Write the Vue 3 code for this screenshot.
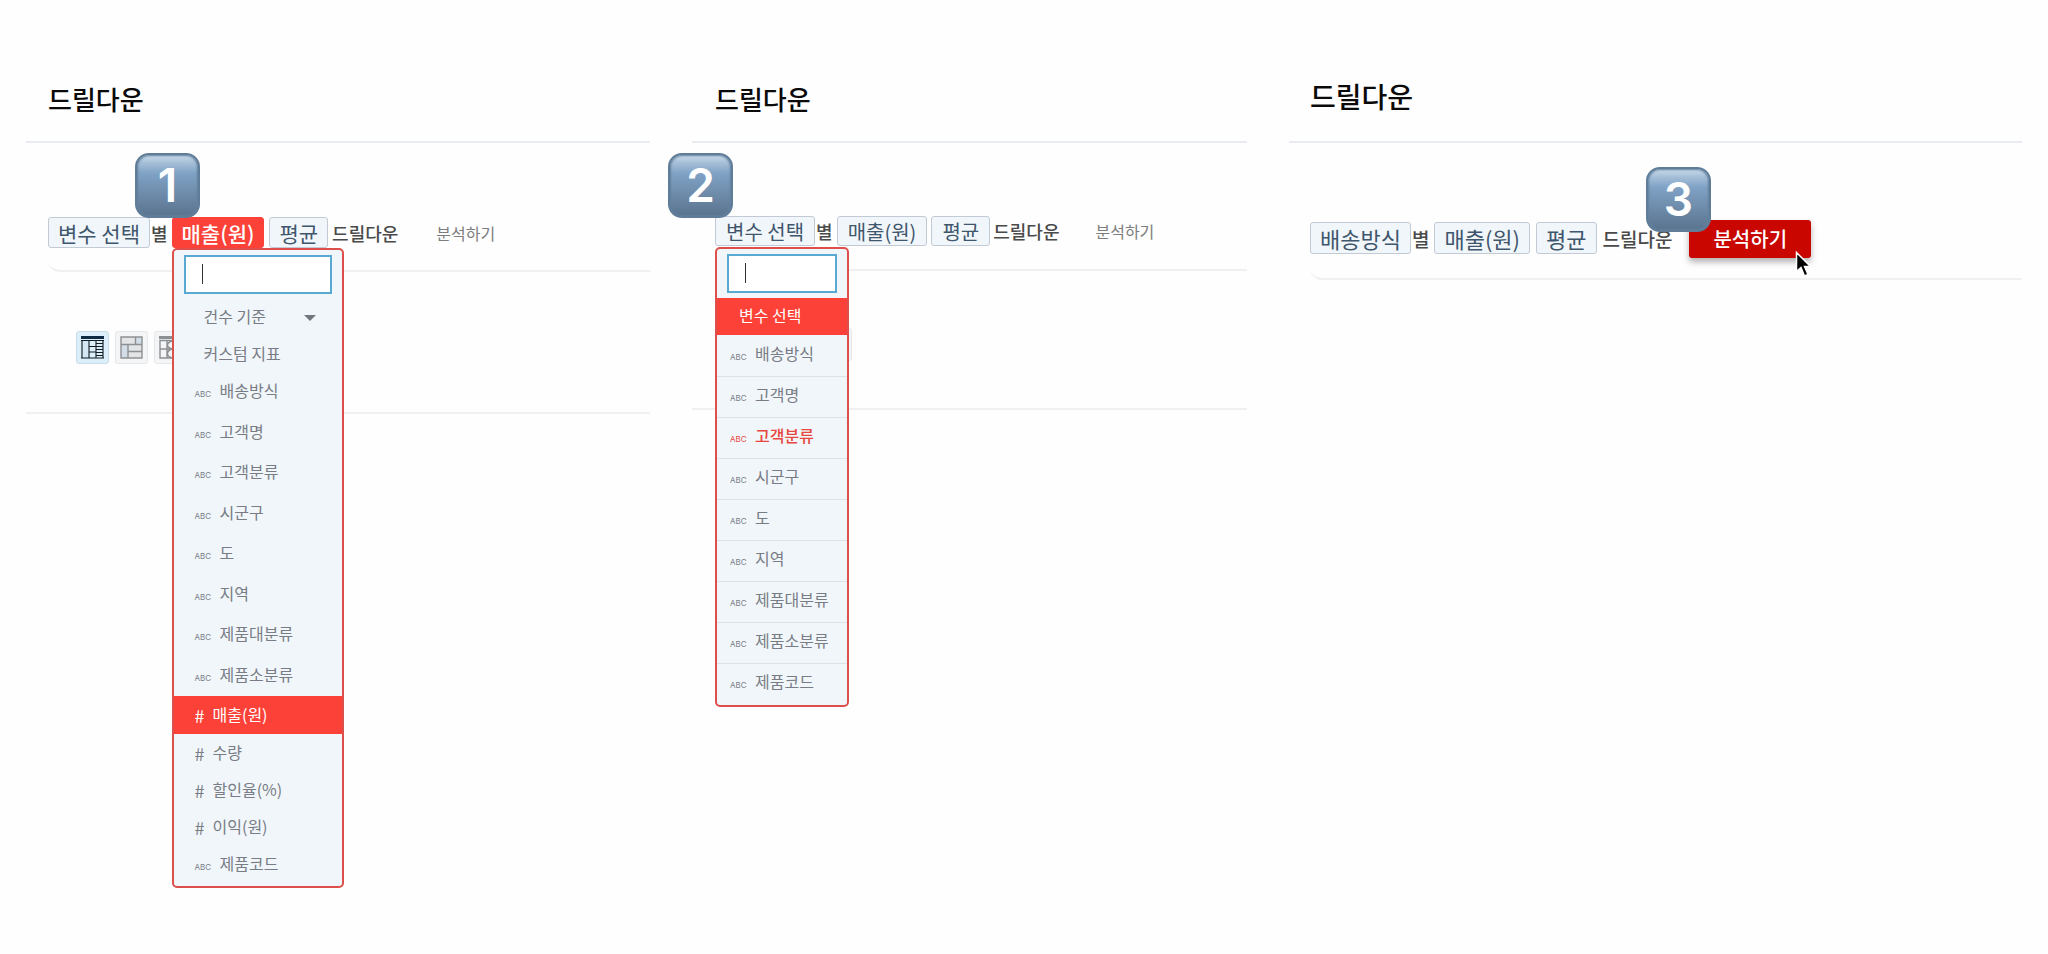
<script setup>
import { ref } from 'vue'

const dimensions = ['배송방식', '고객명', '고객분류', '시군구', '도', '지역', '제품대분류', '제품소분류']

const measures = [
  { label: '매출(원)', kind: 'num', selected: true },
  { label: '수량', kind: 'num' },
  { label: '할인율(%)', kind: 'num' },
  { label: '이익(원)', kind: 'num' },
  { label: '제품코드', kind: 'abc' },
]

const variables = [...dimensions, '제품코드'].map((label) => ({
  label,
  hot: label === '고객분류',
}))

const measureQuery = ref('')
const variableQuery = ref('')
</script>

<template>
  <main class="page">
    <section class="panel one">
      <header class="head"><h2>드릴다운</h2></header>
      <span class="badge">1</span>
      <div class="query">
        <button class="chip" type="button">변수 선택</button>
        <span class="word by">별</span>
        <div class="anchor">
          <button class="chip active" type="button">매출(원)</button>
          <div class="menu">
            <div class="search">
              <input v-model="measureQuery" type="text" aria-label="지표 검색" />
              <i class="caret"></i>
            </div>
            <button class="item plain" type="button">
              건수 기준
              <svg class="arrow" width="12" height="6" viewBox="0 0 12 6"><path d="M0 0h12L6 6z" fill="#72767f" /></svg>
            </button>
            <button class="item plain" type="button">커스텀 지표</button>
            <div class="dims">
              <button v-for="d in dimensions" :key="d" class="item" type="button">
                <small>ABC</small>{{ d }}
              </button>
            </div>
            <button
              v-for="m in measures"
              :key="m.label"
              class="item"
              :class="{ selected: m.selected }"
              type="button"
            >
              <small v-if="m.kind === 'abc'">ABC</small>
              <b v-else>#</b>{{ m.label }}
            </button>
          </div>
        </div>
        <button class="chip" type="button">평균</button>
        <span class="word">드릴다운</span>
        <button class="run" type="button">분석하기</button>
      </div>
      <div class="tools">
        <button class="tool on" type="button" aria-label="트리 표">
          <svg width="23" height="23" viewBox="0 0 23 23" fill="none">
            <path d="M0 0h23v3H0z" fill="#0d2a45" />
            <path d="M1 5h7v17H1z" fill="#d3e7f4" />
            <path d="M1 4v18.500M0 22h23M8 4v18M15 4v18M22 4v18M0 4.500h23M8 10.500h7M8 16h7M15 7.500h7M15 10.500h7M15 13.500h7M15 16.500h7M15 19.500h7" stroke="#111b22" stroke-width="1.100" />
          </svg>
        </button>
        <button class="tool" type="button" aria-label="트리맵">
          <svg width="23" height="23" viewBox="0 0 23 23" fill="none">
            <path d="M1 1h21v21H1z" fill="#e2e4e6" />
            <path d="M15.500 1H22v7h-6.500zM1 9h7v13H1z" fill="#d3dde7" />
            <path d="M1 1h21v21H1zM1 8.500h21M15.500 1v7.500M8 8.500V22M8 15.500h14" stroke="#8d9093" stroke-width="1.400" />
          </svg>
        </button>
        <button class="tool" type="button" aria-label="관계도">
          <svg width="23" height="23" viewBox="0 0 23 23" fill="none">
            <path d="M0 0h23v3H0z" fill="#8d9093" />
            <path d="M1 4.500h21V22H1zM8 4v18M1 13h14M13 5c-6 2-6 6 0 8-6 2-6 7 0 9" stroke="#8d9093" stroke-width="1.400" />
          </svg>
        </button>
      </div>
    </section>

    <section class="panel two">
      <header class="head"><h2>드릴다운</h2></header>
      <span class="badge">2</span>
      <div class="query">
        <div class="anchor">
          <button class="chip" type="button">변수 선택</button>
          <div class="menu">
            <div class="search">
              <input v-model="variableQuery" type="text" aria-label="변수 검색" />
              <i class="caret"></i>
            </div>
            <button class="item plain selected" type="button">변수 선택</button>
            <button v-for="v in variables" :key="v.label" class="item" :class="{ hot: v.hot }" type="button">
              <small>ABC</small>{{ v.label }}
            </button>
          </div>
        </div>
        <span class="word by">별</span>
        <button class="chip" type="button">매출(원)</button>
        <button class="chip" type="button">평균</button>
        <span class="word">드릴다운</span>
        <button class="run" type="button">분석하기</button>
      </div>
      <div class="tools">
        <button class="tool" type="button" aria-label="보기 1"></button>
        <button class="tool" type="button" aria-label="보기 2"></button>
        <button class="tool" type="button" aria-label="보기 3"></button>
      </div>
    </section>

    <section class="panel three">
      <header class="head"><h2>드릴다운</h2></header>
      <span class="badge">3</span>
      <div class="query">
        <button class="chip" type="button">배송방식</button>
        <span class="word by">별</span>
        <button class="chip" type="button">매출(원)</button>
        <button class="chip" type="button">평균</button>
        <span class="word">드릴다운</span>
        <div class="anchor">
          <button class="run primary" type="button">분석하기</button>
          <svg class="pointer" width="18" height="27" viewBox="0 0 18 27">
            <path d="M1.500 1.500v19l4.500-4 3.500 8.500 3.500-1.500-3.500-8h6z" fill="#000" stroke="#fff" stroke-width="1.500" />
          </svg>
        </div>
      </div>
    </section>
  </main>
</template>

<style>
body {
  margin: 0;
  background: #fefefe;
}
</style>

<style scoped>
.page {
  display: grid;
  grid-template-columns: 624fr 555fr 733fr;
  gap: 42px;
  min-height: 100vh;
  box-sizing: border-box;
  padding: 0 26px;
  color: #4a4a4a;
  font-family: "Noto Sans CJK KR", sans-serif;
}
button {
  margin: 0;
  font-family: inherit;
  white-space: nowrap;
  cursor: pointer;
}
.panel {
  position: relative;
  min-width: 0;
}
.head {
  box-sizing: border-box;
  height: 143px;
  padding: 80px 0 0 22px;
  border-bottom: 2px solid #e8ecf1;
}
h2 {
  margin: 0;
  color: #0a0a0a;
  font-size: 26px;
  font-weight: 500;
  line-height: 38px;
}
.query {
  display: flex;
  align-items: center;
  margin-left: 22px;
  padding: 74px 0 22px;
  border-bottom: 2px solid #f0f0f1;
  border-bottom-left-radius: 12px;
}
.anchor {
  position: relative;
}
.chip {
  display: block;
  box-sizing: border-box;
  height: 31px;
  padding: 0 9px;
  border: 1px solid #c1cad5;
  border-radius: 3px;
  background: #f1f6fa;
  color: #40566d;
  font-size: 21px;
  line-height: 28px;
}
.chip.active {
  border-color: #fc4238;
  background: #fc4238;
  color: #fff;
  font-weight: 500;
}
.chip + .chip {
  margin-left: 4px;
}
.anchor + .chip {
  margin-left: 5px;
}
.word {
  margin-left: 4px;
  font-size: 18px;
  font-weight: 500;
  line-height: 28px;
  white-space: nowrap;
}
.by {
  margin: 0 4px 0 1px;
}
.run {
  margin-left: 38px;
  padding: 0;
  border: 0;
  background: none;
  color: #7d7d7d;
  font-size: 16px;
  line-height: 28px;
}
.badge {
  position: absolute;
  z-index: 5;
  top: 153px;
  left: 109px;
  box-sizing: border-box;
  width: 65px;
  height: 65px;
  border: 2px solid #5f7c98;
  border-radius: 14px;
  background: linear-gradient(#c9daea, #a3bdd6 14%, #7fa2c5 30%, #7391b1 55%, #5f7a96 90%, #58728c);
  box-shadow: inset 0 0 2px 1px #64819e;
  color: #fff;
  font-family: Inter, sans-serif;
  font-size: 46px;
  font-weight: 600;
  line-height: 61px;
  text-align: center;
}

/* drop-down */
.menu {
  position: absolute;
  z-index: 3;
  top: 31px;
  left: 0;
  box-sizing: border-box;
  width: 172px;
  padding-bottom: 4px;
  border: 2px solid #dd4f4a;
  border-radius: 5px;
  background: #f1f6fa;
}
.search {
  position: relative;
  padding: 5px 10px 4px;
}
.search input {
  display: block;
  box-sizing: border-box;
  width: 100%;
  height: 39px;
  padding: 0 16px;
  border: 2px solid #5aa9d2;
  border-radius: 0;
  outline: 0;
  background: #fff;
  font: inherit;
  font-size: 16px;
}
.caret {
  position: absolute;
  top: 14px;
  left: 28px;
  width: 1px;
  height: 20px;
  background: #333;
}
.item {
  display: flex;
  align-items: center;
  box-sizing: border-box;
  width: 100%;
  height: 37px;
  padding: 0 16px 2px 21px;
  border: 0;
  background: none;
  color: #787c85;
  font-size: 16px;
  line-height: 24px;
  text-align: left;
}
.item.plain {
  padding-left: 30px;
}
.item small {
  width: 25px;
  padding-top: 8px;
  font-family: Inter, sans-serif;
  font-size: 8px;
  line-height: 16px;
}
.item b {
  width: 18px;
  padding-top: 2px;
  font-size: 18px;
  font-weight: 400;
}
.arrow {
  margin: 4px 10px 0 auto;
}
.dims {
  display: flex;
  flex-direction: column;
  height: 324px;
}
.dims .item {
  flex: 1;
  padding-bottom: 4px;
}
.item.selected {
  height: 38px;
  background: #fc4238;
  color: #fff;
}
.item.hot {
  color: #e8473f;
  font-weight: 500;
}
.item.hot small {
  font-weight: 400;
}

/* view switcher */
.tools {
  display: flex;
  gap: 6px;
  padding: 59px 0 48px 50px;
  border-bottom: 2px solid #f0f0f1;
}
.tool {
  display: grid;
  place-items: center;
  box-sizing: border-box;
  width: 33px;
  height: 33px;
  padding: 0;
  border: 1px solid #e6e7e8;
  border-radius: 3px;
  background: #f4f5f6;
}
.tool.on {
  border-color: #c9dde9;
  background: #dceef9;
}

/* second panel */
.two .head {
  padding-left: 23px;
}
.two .badge {
  left: -24px;
}
.two .query {
  margin-left: 23px;
  padding: 73px 0 23px;
}
.two .chip {
  height: 30px;
  padding: 0 10px;
  font-size: 20px;
  line-height: 27px;
}
.two .word {
  margin-left: 3px;
}
.two .by {
  margin-left: 1px;
}
.two .run {
  margin-left: 36px;
}
.two .menu {
  width: 134px;
  padding-bottom: 1px;
}
.two .search {
  padding-bottom: 5px;
}
.two .item {
  height: 41px;
  padding-left: 13px;
  padding-bottom: 6px;
}
.two .item + .item {
  border-top: 1px solid #dfe2e5;
}
.two .item.plain {
  height: 37px;
  padding-left: 22px;
  padding-bottom: 4px;
}
.two .selected + .item {
  border-top: 0;
}
.two .tools {
  padding: 57px 0 47px 49px;
}

/* third panel */
.three .head {
  padding: 77px 0 0 21px;
}
.three h2 {
  font-size: 28px;
}
.three .badge {
  top: 167px;
  left: 357px;
}
.three .query {
  margin-left: 21px;
  padding: 77px 0 20px;
}
.three .chip {
  height: 32px;
  margin-bottom: 2px;
  font-size: 22px;
  line-height: 29px;
}
.three .chip + .chip {
  margin-left: 6px;
}
.three .word {
  margin-left: 6px;
  font-size: 19px;
}
.three .by {
  margin: 0 5px 0 1px;
}
.run.primary {
  display: block;
  height: 38px;
  margin-left: 17px;
  padding: 0 24px;
  border-radius: 3px;
  background: #c90600;
  box-shadow: 0 4px 6px rgba(0, 0, 0, 0.3);
  color: #fff;
  font-size: 20px;
  font-weight: 500;
}
.pointer {
  position: absolute;
  right: -2px;
  bottom: -20px;
}
</style>
